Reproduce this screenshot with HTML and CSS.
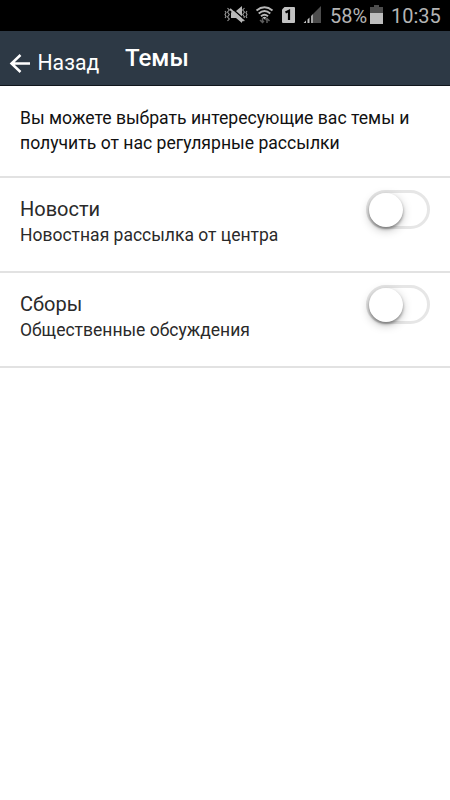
FILE: index.html
```
<!DOCTYPE html>
<html lang="ru">
<head>
<meta charset="utf-8">
<title>Темы</title>
<link rel="stylesheet" href="styles.css">
</head>
<body>
<div class="status">
  <svg class="status-icons" width="106" height="31" viewBox="0 0 106 31">
    <path fill="none" stroke="#999" stroke-width="1.100" d="M3.500 8l1.800 2-1.800 2 1.800 2.500-1.800 2.500 1.800 2-1.800 2M1 11l1 1.500-1 2 1 2-1 1.500M20.500 8l-1.800 2 1.800 2-1.800 2.500 1.800 2.500-1.800 2 1.800 2M23 11l-1 1.500 1 2-1 2 1 1.500"/>
    <path fill="#b8b8b8" d="M8 11h4l6-5v17l-6-5H7v-5z"/>
    <path stroke="#000" stroke-width="1.500" d="M8 8.500l12 10.500"/>
    <path stroke="#b8b8b8" stroke-width="1.700" d="M6 9L19.500 21"/>
    <g fill="none" stroke="#b8b8b8" stroke-width="1.900">
      <path d="M32.500 10.500q8-6.500 16 0M34.700 13.500q5.800-5 11.600 0M37 16.300q3.500-3 7 0"/>
    </g>
    <path fill="#b8b8b8" d="M38.500 17.500q2-1.500 4 0l-2 2z"/>
    <path fill="none" stroke="#5c5c5c" stroke-width="1.500" d="M38.500 23v-5M36 20l2.500 2.500L40 21M43 18v5M41.500 20L43 18.500l2.500 2.500"/>
    <path fill="#c2c2c2" d="M60.500 7H70q1 0 1 1v14q0 1-1 1H59q-1 0-1-1V9.500z"/>
    <path fill="none" stroke="#000" stroke-width="2.200" d="M61.500 12.500l3.500-1.800V20"/>
    <path fill="#4d4d4d" d="M97 6v17h-8v-9z"/>
    <path fill="#c2c2c2" d="M79.500 23l2.500-2.500V23zM83.500 23v-3.500l2-2V23z"/>
    <path fill="#a5a5a5" d="M87 16l2-2v9h-2z"/>
  </svg>
  <span class="percent">58%</span>
  <svg class="battery" width="13" height="19" viewBox="0 0 13 19">
    <path fill="#4d4d4d" d="M4 0h5v2h4v7H0V2h4z"/>
    <path fill="#bdbdbd" d="M0 8h13v11H0z"/>
  </svg>
  <span class="clock">10:35</span>
</div>
<header class="bar">
  <a class="back">
    <svg width="22" height="20" viewBox="0 0 22 20"><path d="M21 10.500H2.500M11.500 2L2.500 10.500l9 8.500" fill="none" stroke="#fff" stroke-width="2.500"/></svg>
    <span>Назад</span>
  </a>
  <h1 class="title">Темы</h1>
</header>
<main>
  <p class="intro">Вы можете выбрать интересующие вас темы и получить от нас регулярные рассылки</p>
  <section class="topic">
    <div>
      <h2 class="name">Новости</h2>
      <p class="note">Новостная рассылка от центра</p>
    </div>
    <span class="switch"><span class="knob"></span></span>
  </section>
  <section class="topic">
    <div>
      <h2 class="name">Сборы</h2>
      <p class="note">Общественные обсуждения</p>
    </div>
    <span class="switch"><span class="knob"></span></span>
  </section>
</main>
</body>
</html>
```
FILE: styles.css
```
* { box-sizing: border-box; }
body {
  margin: 0;
  background: #fff;
  color: #111;
  font-family: Roboto, "Liberation Sans", sans-serif;
}
h1, h2, p { margin: 0; font-weight: 400; }
.status {
  height: 31px;
  display: flex;
  align-items: flex-start;
  background: #000;
  color: #b4b4b4;
  padding-left: 224px;
  font-size: 20px;
  line-height: 32px;
  white-space: nowrap;
}
.status-icons, .battery { flex: none; }
.percent { width: 40px; }
.battery { margin-top: 5px; }
.clock { margin-left: 8px; }
.bar {
  height: 55px;
  display: flex;
  background: #2d3945;
  border-bottom: 1px solid #10161c;
  color: #fff;
}
.back {
  width: 125px;
  display: flex;
  align-items: center;
  padding: 9px 0 0 9px;
  gap: 6.500px;
  font-size: 21.200px;
}
.title {
  font-size: 24px;
  font-weight: 500;
  line-height: 54px;
}
.intro {
  height: 92px;
  padding: 20px 20px 0;
  border-bottom: 2px solid #e2e2e2;
  font-size: 17.600px;
  line-height: 25px;
}
.topic {
  height: 95px;
  display: flex;
  justify-content: space-between;
  padding: 12px 20px 0;
  border-bottom: 2px solid #e2e2e2;
}
.name { padding-top: 6px; font-size: 20px; line-height: 27px; color: #2a2a2a; }
.note { font-size: 17.500px; line-height: 25px; color: #2a2a2a; }
.switch {
  width: 64px;
  height: 39px;
  border: 3px solid #e6e6e6;
  border-radius: 20px;
}
.knob {
  display: block;
  width: 34px;
  height: 34px;
  margin: -0.500px 0 0 -0.500px;
  border-radius: 50%;
  background: #fff;
  box-shadow: 0 2px 3px rgba(0, 0, 0, .35), 0 3px 10px rgba(0, 0, 0, .25);
}
```
